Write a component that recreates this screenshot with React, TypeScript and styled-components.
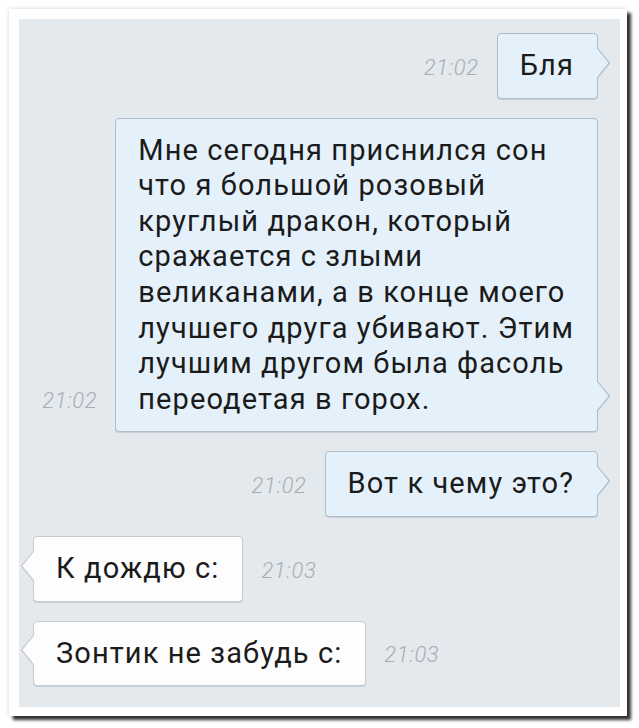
import { FC } from 'react';
import styled, { createGlobalStyle } from 'styled-components';

const GlobalStyle = createGlobalStyle`
  html, body {
    margin: 0;
    padding: 0;
    background: #ffffff;
  }
  body {
    font-family: Roboto, "Noto Sans", "DejaVu Sans", sans-serif;
  }
`;

const Page = styled.div`
  width: 639px;
  height: 728px;
  padding: 9px 0 0 9px;
  box-sizing: border-box;
  background: #ffffff;
`;

const Frame = styled.div`
  width: 618px;
  height: 707px;
  box-sizing: border-box;
  padding: 10px 7px 9px 10px;
  background: #ffffff;
  box-shadow: 4px 4px 3px rgba(0, 0, 0, 0.8), 0 0 4px rgba(0, 0, 0, 0.18);
`;

const Chat = styled.div`
  height: 100%;
  box-sizing: border-box;
  background: #e4e9ee;
  padding: 14px 22px 0 14px;
  display: flex;
  flex-direction: column;
  gap: 19px;
`;

const Row = styled.div<{ out: boolean }>`
  display: flex;
  align-items: flex-end;
  justify-content: ${({ out }) => (out ? 'flex-end' : 'flex-start')};
  flex-direction: ${({ out }) => (out ? 'row' : 'row-reverse')};
  gap: 18px;
`;

const Time = styled.span<{ out: boolean }>`
  font-family: Roboto, sans-serif;
  font-weight: 300;
  font-style: italic;
  font-size: 22px;
  letter-spacing: 0.6px;
  color: #a8adb2;
  margin-bottom: 19px;
  ${({ out }) => (out ? '' : 'margin-right: auto;')}
`;

const Bubble = styled.div<{ out: boolean }>`
  position: relative;
  padding: 14px 23px 14px 22px;
  border-radius: 4px;
  background: ${({ out }) => (out ? '#e5f1fa' : '#fdfdfd')};
  border: 1px solid ${({ out }) => (out ? '#aebdcb' : '#c4cad1')};
  box-shadow: 0 1px 0 rgba(120, 135, 150, 0.25);
  color: #1b1b1b;
  font-size: 29px;
  line-height: 35.6px;
  white-space: pre-line;
  letter-spacing: 1.1px;
`;

const Tail = styled.svg<{ out: boolean }>`
  position: absolute;
  bottom: 19px;
  width: 15px;
  height: 32px;
  overflow: visible;
  ${({ out }) => (out ? 'right: -14px;' : 'left: -14px; transform: scaleX(-1);')}
`;

const BubbleTail: FC<{ out: boolean }> = ({ out }) => (
  <Tail out={out} viewBox="0 0 15 32">
    <path
      d="M1 0.5 C2 2 11 13 13.5 16 C11 19 2 30 1 31.5 Z"
      fill={out ? '#e5f1fa' : '#fdfdfd'}
      stroke="none"
    />
    <path
      d="M1 0.5 C2 2 11 13 13.5 16 C11 19 2 30 1 31.5"
      fill="none"
      stroke={out ? '#aebdcb' : '#c4cad1'}
      strokeWidth="1.2"
      strokeLinejoin="round"
    />
  </Tail>
);

interface Message {
  text: string;
  time: string;
  out: boolean;
}

const messages: Message[] = [
  { text: 'Бля', time: '21:02', out: true },
  {
    text:
      'Мне сегодня приснился сон\nчто я большой розовый\nкруглый дракон, который\nсражается с злыми\nвеликанами, а в конце моего\nлучшего друга убивают. Этим\nлучшим другом была фасоль\nпереодетая в горох.',
    time: '21:02',
    out: true,
  },
  { text: 'Вот к чему это?', time: '21:02', out: true },
  { text: 'К дождю с:', time: '21:03', out: false },
  { text: 'Зонтик не забудь с:', time: '21:03', out: false },
];

const App: FC = () => {
  return (
    <>
      <GlobalStyle />
      <Page>
        <Frame>
          <Chat>
            {messages.map((m, i) => (
              <Row out={m.out} key={i}>
                <Time out={m.out}>{m.time}</Time>
                <Bubble out={m.out}>
                  {m.text}
                  <BubbleTail out={m.out} />
                </Bubble>
              </Row>
            ))}
          </Chat>
        </Frame>
      </Page>
    </>
  );
};

export default App;
